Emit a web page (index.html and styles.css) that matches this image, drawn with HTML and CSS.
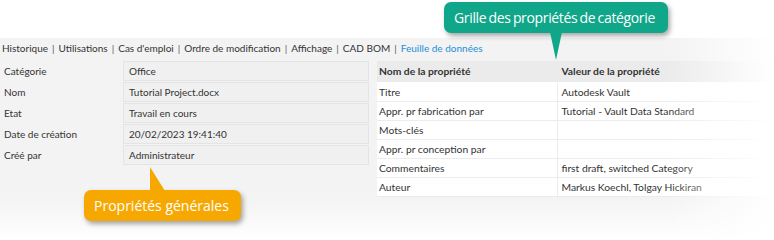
FILE: index.html
```html
<!DOCTYPE html>
<html lang="fr">
<head>
    <meta charset="UTF-8">
    <title>Vault - Feuille de données</title>
    <link rel="stylesheet" href="styles.css">
</head>
<body>
    <div class="panel">
        <nav class="tabs">
            <a href="#">Historique</a><span class="sep">|</span>
            <a href="#">Utilisations</a><span class="sep">|</span>
            <a href="#">Cas d'emploi</a><span class="sep">|</span>
            <a href="#">Ordre de modification</a><span class="sep">|</span>
            <a href="#">Affichage</a><span class="sep">|</span>
            <a href="#">CAD BOM</a><span class="sep">|</span>
            <a href="#" class="active">Feuille de données</a>
        </nav>

        <div class="content">
            <section class="general">
                <div class="field"><span class="field-label">Catégorie</span><span class="field-value">Office</span></div>
                <div class="field"><span class="field-label">Nom</span><span class="field-value">Tutorial Project.docx</span></div>
                <div class="field"><span class="field-label">Etat</span><span class="field-value">Travail en cours</span></div>
                <div class="field"><span class="field-label">Date de création</span><span class="field-value">20/02/2023 19:41:40</span></div>
                <div class="field"><span class="field-label">Créé par</span><span class="field-value">Administrateur</span></div>
            </section>

            <table class="props">
                <thead>
                    <tr><th>Nom de la propriété</th><th>Valeur de la propriété</th></tr>
                </thead>
                <tbody>
                    <tr><td>Titre</td><td>Autodesk Vault</td></tr>
                    <tr><td>Appr. pr fabrication par</td><td>Tutorial - Vault Data Standard</td></tr>
                    <tr><td>Mots-clés</td><td></td></tr>
                    <tr><td>Appr. pr conception par</td><td></td></tr>
                    <tr><td>Commentaires</td><td>first draft, switched Category</td></tr>
                    <tr><td>Auteur</td><td>Markus Koechl, Tolgay Hickiran</td></tr>
                </tbody>
            </table>
        </div>
    </div>

    <div class="fade"></div>

    <div class="callout callout-green">Grille des propriétés de catégorie</div>
    <div class="callout callout-orange">Propriétés générales</div>
</body>
</html>
```

FILE: styles.css
```css
* { margin: 0; padding: 0; box-sizing: border-box; }
:root { --panel: #f3f3f3; --text: #333; --line: #e4e4e4; --green: #10a689; --orange: #f7a800; --link: #1c8fd8; }
body { width: 774px; height: 240px; overflow: hidden; background: #fff; color: var(--text); font-family: Lato, 'Noto Sans', sans-serif; font-size: 10px; position: relative; }

.panel { margin-top: 38px; height: 202px; background: var(--panel); }

.tabs { display: flex; align-items: center; height: 19px; padding-left: 2px; white-space: nowrap; }
.tabs a { color: var(--text); text-decoration: none; }
.tabs a.active { color: var(--link); }
.tabs .sep { padding: 0 4px; color: #555; }

.content { display: flex; align-items: flex-start; margin-top: 4px; }

.general { width: 377px; display: flex; flex-direction: column; gap: 1px; }
.field { display: flex; align-items: center; height: 20px; }
.field-label { width: 123px; padding-left: 4px; }
.field-value { width: 246px; height: 20px; line-height: 18px; padding-left: 5px; background: #f0f0f0; border: 1px solid var(--line); }

.props { flex: 1; border-collapse: collapse; background: #fff; table-layout: fixed; font-size: 10.3px; }
.props th, .props td { height: 19px; padding: 0 4px; text-align: left; border-bottom: 1px solid #ececec; white-space: nowrap; }
.props th { height: 21px; background: #ebebeb; font-weight: bold; border-bottom: 1px solid #fff; }
.props th:first-child, .props td:first-child { width: 180px; padding-left: 2px; border-right: 1px solid #ececec; }

.fade { position: absolute; inset: 0; pointer-events: none;
    background:
        linear-gradient(to right, rgba(255,255,255,0) 86%, #fff 100%),
        linear-gradient(to bottom, rgba(255,255,255,0) 82%, #fff 100%); }

.callout { position: absolute; color: #fff; font-family: 'Open Sans', sans-serif; font-size: 14px; border-radius: 7px; padding: 0 10px; height: 31px; line-height: 31px; box-shadow: 2px 3px 5px rgba(0,0,0,0.35); white-space: nowrap; }
.callout::after { content: ''; position: absolute; }
.callout-green { left: 444px; top: 2px; width: 224px; background: var(--green); letter-spacing: -0.35px; word-spacing: -1px; }
.callout-green::after { left: 106px; top: 30px; border-left: 6px solid transparent; border-right: 6px solid transparent; border-top: 28px solid var(--green); }
.callout-orange { left: 84px; top: 190px; width: 157px; background: var(--orange); }
.callout-orange::after { left: 66px; top: -23px; border-left: 0 solid transparent; border-right: 15px solid transparent; border-bottom: 24px solid var(--orange); }
```
